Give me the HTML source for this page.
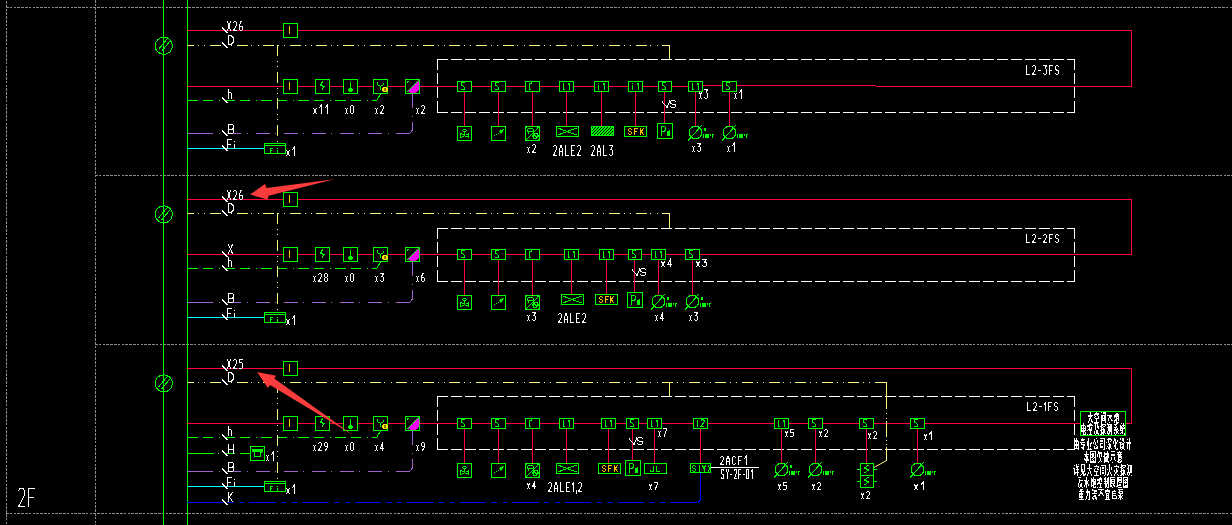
<!DOCTYPE html><html><head><meta charset="utf-8"><style>html,body{margin:0;padding:0;background:#000;overflow:hidden}</style></head><body><svg width="1232" height="525" viewBox="0 0 1232 525" shape-rendering="crispEdges" fill="none" style="display:block">
<rect width="1232" height="525" fill="#000"/>
<path d="M6 7.5H1232" stroke="#8c8c8c" stroke-dasharray="2.5 1.3" stroke-dashoffset="0"/>
<path d="M6.5 1V525" stroke="#8c8c8c" stroke-dasharray="2.5 1.3" stroke-dashoffset="0"/>
<path d="M95.5 0V525" stroke="#8c8c8c" stroke-dasharray="2.5 1.3" stroke-dashoffset="0"/>
<path d="M95 175.5H1232" stroke="#8c8c8c" stroke-dasharray="2.5 1.3" stroke-dashoffset="0"/>
<path d="M95 344.5H1232" stroke="#8c8c8c" stroke-dasharray="2.5 1.3" stroke-dashoffset="0"/>
<path d="M6 513.5H1232" stroke="#8c8c8c" stroke-dasharray="2.5 1.3" stroke-dashoffset="0"/>
<path d="M163.5 0V525" stroke="#00ff00"/>
<path d="M187.5 0V525" stroke="#00ff00"/>
<path d="M18.50 490.75L20.00 488.50H23.00L24.50 490.75V495.25L18.50 506.50H24.50" stroke="#ffffff" stroke-linecap="square"/>
<path d="M34.50 488.50H28.50V506.50M28.50 497.50H33.00" stroke="#ffffff" stroke-linecap="square"/>
<circle cx="163.8" cy="45.8" r="8.6" stroke="#00ff00"/>
<path d="M158.5 49.5L167.5 38.5" stroke="#00ff00" stroke-width="1"/>
<path d="M161.5 51.5L170.5 40.5" stroke="#00ff00" stroke-width="1"/>
<path d="M187 30.5H1132" stroke="#ff0040"/>
<path d="M1131.5 30V87" stroke="#ff0040"/>
<path d="M187 86.5H703" stroke="#ff0040"/>
<path d="M703 85.5H876" stroke="#ff0040"/>
<path d="M876 86.5H1132" stroke="#ff0040"/>
<path d="M187 45.5H670" stroke="#f8f880" stroke-dasharray="11 3.8 1 5.2 1 4.6" stroke-dashoffset="3.6"/>
<path d="M437 59.5H1075" stroke="#ffffff" stroke-dasharray="10.5 3.5" stroke-dashoffset="0"/>
<path d="M437 112.5H1075" stroke="#ffffff" stroke-dasharray="10.5 3.5" stroke-dashoffset="0"/>
<path d="M437.5 59V113" stroke="#ffffff" stroke-dasharray="10.5 3.5" stroke-dashoffset="0"/>
<path d="M1074.5 59V113" stroke="#ffffff" stroke-dasharray="10.5 3.5" stroke-dashoffset="0"/>
<path d="M669.5 45V60" stroke="#f8f880"/>
<path d="M187 100.5H377" stroke="#00ff00" stroke-dasharray="10.5 5 10.5 5.5 1 4.5" stroke-dashoffset="0"/>
<path d="M376.5 100.5L380.5 94" stroke="#00ff00" stroke-width="1"/>
<path d="M187 133.5H212" stroke="#a064d0"/>
<path d="M412.5 94V130" stroke="#a064d0" stroke-dasharray="14 7.5 1 5.6"/>
<path d="M412.5 130L409.5 133.5" stroke="#a064d0" stroke-width="1"/>
<path d="M410 133.5H212" stroke="#a064d0" stroke-dasharray="14 7.5 1 5.6"/>
<path d="M187 148.5H265" stroke="#00ffff"/>
<path d="M277.5 45V144" stroke="#f8f880" stroke-dasharray="11 5 1 4 1 4.6" stroke-dashoffset="0"/>
<rect x="283.5" y="23.5" width="14" height="14" stroke="#00ff00" fill="#000"/>
<path d="M289.5 26V34" stroke="#ffc000"/>
<rect x="283.5" y="79.5" width="14" height="14" stroke="#00ff00" fill="#000"/>
<path d="M289.5 82V90" stroke="#ffc000"/>
<rect x="315.5" y="79.5" width="14" height="14" stroke="#00ff00" fill="#000"/>
<path d="M322.5 81.5L320.5 85.5L324.5 86.5L322 89.5" stroke="#00ff00" fill="none" stroke-width="1"/>
<rect x="343.5" y="79.5" width="14" height="14" stroke="#00ff00" fill="#000"/>
<path d="M350.5 82V89" stroke="#00ff00"/>
<rect x="349" y="88" width="3" height="4" fill="#00ff00"/>
<rect x="348" y="89" width="5" height="2" fill="#00ff00"/>
<rect x="373.5" y="79.5" width="14" height="14" stroke="#00ff00" fill="#000"/>
<path d="M377.5 82V84.5L380.5 86.5L383.5 84.5V83M380.5 86.5V90" stroke="#00ff00" fill="none" stroke-width="1"/>
<rect x="383" y="87" width="4" height="5" fill="#ffe800"/>
<rect x="382" y="88" width="6" height="3" fill="#ffe800"/>
<rect x="384" y="88" width="2" height="3" fill="#8a7000"/>
<rect x="405.5" y="79.5" width="14" height="14" stroke="#00ff00" fill="#000"/>
<path d="M408 91L417.8 81L418.8 83V89Q418 92 414 92.8Q410 92.8 408 91Z" stroke="#ff00ff" fill="#ff00ff" stroke-width="1" shape-rendering="auto"/>
<path d="M406.5 92.5L418.5 80.5" stroke="#00ff00" stroke-width="1"/>
<rect x="407" y="81" width="1" height="2" fill="#00ff00"/>
<rect x="407" y="81" width="2" height="1" fill="#00ff00"/>
<rect x="264.5" y="143.5" width="21" height="10" stroke="#00ff00" fill="#000"/>
<path d="M264 145.5H286" stroke="#00ff00"/>
<path d="M270.5 148V154" stroke="#00ff00"/>
<path d="M270 148.5H273" stroke="#00ff00"/>
<path d="M270 150.5H272" stroke="#00ff00"/>
<path d="M277.5 150V154" stroke="#00ff00"/>
<rect x="277" y="148" width="1" height="1" fill="#00ff00"/>
<path d="M286.50 150.10V150.90M289.50 150.10V150.90M287.50 151.10V154.90M288.50 151.10V154.90M286.50 155.10V155.90M289.50 155.10V155.90M292.50 149.50L294.10 147.50V155.50" stroke="#ffffff" stroke-linecap="square"/>
<path d="M222 27.5L227.5 33" stroke="#ffffff" stroke-width="1"/>
<path d="M227.50 21.50L230.50 30.50M230.50 21.50L227.50 30.50M233.50 22.62L234.25 21.50H235.75L236.50 22.62V24.88L233.50 30.50H236.50M241.75 21.50H241.00L239.50 24.88V29.38L240.25 30.50H241.75L242.50 29.38V27.12L241.75 26.00H239.50" stroke="#ffffff" stroke-linecap="square"/>
<path d="M222 42.5L227.5 48" stroke="#ffffff" stroke-width="1"/>
<path d="M228.50 35.50V44.50H231.00L233.50 42.25V37.75L231.00 35.50Z" stroke="#ffffff" stroke-linecap="square"/>
<path d="M222 97.5L227.5 103" stroke="#ffffff" stroke-width="1"/>
<path d="M228.50 89.50V98.50M228.50 94.00L229.25 92.88H230.75L231.50 94.00V98.50" stroke="#ffffff" stroke-linecap="square"/>
<path d="M222 130.5L227.5 136" stroke="#ffffff" stroke-width="1"/>
<path d="M228.50 124.50V133.50H232.25L233.50 132.38V130.12L232.25 129.00H228.50M228.50 124.50H232.25L233.50 125.62V127.88L232.25 129.00" stroke="#ffffff" stroke-linecap="square"/>
<path d="M222 145.5L227.5 151" stroke="#ffffff" stroke-width="1"/>
<path d="M231.50 139.50H227.50V148.50M227.50 144.00H230.50M234.50 144.22V148.50M234.50 141.64V141.86" stroke="#ffffff" stroke-linecap="square"/>
<path d="M313.50 108.10V108.90M316.50 108.10V108.90M314.50 109.10V112.90M315.50 109.10V112.90M313.50 113.10V113.90M316.50 113.10V113.90M319.50 107.50L321.10 105.50V113.50M325.50 107.50L327.10 105.50V113.50" stroke="#ffffff" stroke-linecap="square"/>
<path d="M345.50 108.10V108.90M347.50 108.10V108.90M346.17 109.10V112.90M346.83 109.10V112.90M345.50 113.10V113.90M347.50 113.10V113.90M350.50 106.50V112.50L351.25 113.50H352.75L353.50 112.50V106.50L352.75 105.50H351.25Z" stroke="#ffffff" stroke-linecap="square"/>
<path d="M375.50 108.10V108.90M377.50 108.10V108.90M376.17 109.10V112.90M376.83 109.10V112.90M375.50 113.10V113.90M377.50 113.10V113.90M380.50 106.50L381.25 105.50H382.75L383.50 106.50V108.50L380.50 113.50H383.50" stroke="#ffffff" stroke-linecap="square"/>
<path d="M416.50 108.10V108.90M418.50 108.10V108.90M417.17 109.10V112.90M417.83 109.10V112.90M416.50 113.10V113.90M418.50 113.10V113.90M421.50 106.50L422.25 105.50H423.75L424.50 106.50V108.50L421.50 113.50H424.50" stroke="#ffffff" stroke-linecap="square"/>
<path d="M464.5 91V127" stroke="#ff0040"/>
<path d="M498.5 91V127" stroke="#ff0040"/>
<path d="M532.5 91V127" stroke="#ff0040"/>
<path d="M566.5 91V127" stroke="#ff0040"/>
<path d="M601.5 91V127" stroke="#ff0040"/>
<path d="M635.5 91V127" stroke="#ff0040"/>
<path d="M664.5 91V127" stroke="#ff0040"/>
<path d="M695.5 91V127" stroke="#ff0040"/>
<path d="M729.5 91V127" stroke="#ff0040"/>
<rect x="457.5" y="81.5" width="14" height="10" stroke="#00ff00" fill="#000"/>
<path d="M465 82.5H461.5V85L464.5 87.5V89.5M461 89.5H464" stroke="#00ff00" fill="none" stroke-width="1"/>
<rect x="491.5" y="81.5" width="14" height="10" stroke="#00ff00" fill="#000"/>
<path d="M499 82.5H495.5V85L498.5 87.5V89.5M495 89.5H498" stroke="#00ff00" fill="none" stroke-width="1"/>
<rect x="525.5" y="81.5" width="14" height="10" stroke="#00ff00" fill="#000"/>
<path d="M532.5 82.5L529.5 84V89.5H531" stroke="#00ff00" fill="none" stroke-width="1"/>
<rect x="559.5" y="81.5" width="14" height="10" stroke="#00ff00" fill="#000"/>
<path d="M563.5 83V89.5H564.5M569.5 82.5V89.5M568 84.5L569.5 83" stroke="#00ff00" fill="none" stroke-width="1"/>
<rect x="594.5" y="81.5" width="14" height="10" stroke="#00ff00" fill="#000"/>
<path d="M598.5 85V89.5M598.5 83V83.5M604.5 82.5V89.5M603 84.5L604.5 83" stroke="#00ff00" fill="none" stroke-width="1"/>
<rect x="628.5" y="81.5" width="14" height="10" stroke="#00ff00" fill="#000"/>
<path d="M632.5 85V89.5M632.5 83V83.5M638.5 82.5V89.5M637 84.5L638.5 83" stroke="#00ff00" fill="none" stroke-width="1"/>
<rect x="658.5" y="81.5" width="13" height="10" stroke="#00ff00" fill="#000"/>
<path d="M666 82.5H662.5V85L665.5 87.5V89.5M662 89.5H665" stroke="#00ff00" fill="none" stroke-width="1"/>
<rect x="688.5" y="81.5" width="14" height="10" stroke="#00ff00" fill="#000"/>
<path d="M692.5 83V89.5H693.5M698.5 82.5V89.5M697 84.5L698.5 83" stroke="#00ff00" fill="none" stroke-width="1"/>
<rect x="722.5" y="81.5" width="14" height="10" stroke="#00ff00" fill="#000"/>
<path d="M730 82.5H726.5V85L729.5 87.5V89.5M726 89.5H729" stroke="#00ff00" fill="none" stroke-width="1"/>
<rect x="457.5" y="126.5" width="14" height="14" stroke="#00ff00" fill="#000"/>
<ellipse cx="464.5" cy="130.5" rx="2" ry="1" stroke="#00ff00"/>
<path d="M464.5 131.5V134.5M461.5 133.5H460.5V137.5H461.5M461.5 134.5H463.5M461.5 136.5H463.5L464.5 135.5L465.5 136.5H467.5M465.5 134.5H467.5M467.5 133.5H468.5V137.5H467.5" stroke="#00ff00" fill="none" stroke-width="1"/>
<rect x="491.5" y="126.5" width="14" height="14" stroke="#00ff00" fill="#000"/>
<path d="M494 135.5H495M496 134.5H497M498 133.5H499M500 132.5L503 130" stroke="#00ff00" fill="none" stroke-width="1"/>
<path d="M503.5 129.5L499.5 131L501 133.5Z" stroke="#00ff00" fill="#00ff00" stroke-width="1" shape-rendering="auto"/>
<rect x="525.5" y="126.5" width="14" height="14" stroke="#00ff00" fill="#000"/>
<rect x="526" y="127" width="1" height="1" fill="#00ff00"/>
<rect x="538" y="139" width="1" height="1" fill="#00ff00"/>
<rect x="537" y="127" width="2" height="1" fill="#00ff00"/>
<rect x="526" y="139" width="1" height="1" fill="#00ff00"/>
<path d="M526.5 139.5L538.5 127.5" stroke="#00ff00" stroke-width="1"/>
<path d="M527.5 131.5V129.5L528.5 128.5H532.5L533.5 129.5V131.5H527.5M528.5 132V133.5" stroke="#00ff00" fill="none" stroke-width="1"/>
<circle cx="535.5" cy="136" r="2.6" stroke="#00ff00"/>
<path d="M533.5 134L537.5 138" stroke="#00ff00" stroke-width="1"/>
<rect x="556.5" y="126.5" width="22" height="10" stroke="#00ff00" fill="#000"/>
<path d="M558 128L567.0 131.5L577 135M558 135L567.0 131.5L577 128" stroke="#00ff00" fill="none" stroke-width="1"/>
<rect x="591" y="126" width="23" height="10" fill="#00ff00"/>
<clipPath id="hc591126"><rect x="592" y="127" width="21" height="8"/></clipPath>
<path d="M582 135L590 127M585 135L593 127M588 135L596 127M591 135L599 127M594 135L602 127M597 135L605 127M600 135L608 127M603 135L611 127M606 135L614 127M609 135L617 127M612 135L620 127M615 135L623 127M618 135L626 127" stroke="#000" clip-path="url(#hc591126)"/>
<rect x="624.5" y="126.5" width="22" height="10" stroke="#00ff00" fill="#000"/>
<path d="M631.50 129.25L630.75 128.50H629.25L628.50 129.25V130.75L629.25 131.50H630.75L631.50 132.25V133.75L630.75 134.50H629.25L628.50 133.75M637.50 128.50H634.50V134.50M634.50 131.50H636.75M640.50 128.50V134.50M643.50 128.50L640.50 132.25M641.25 131.50L643.50 134.50" stroke="#ffc000" stroke-linecap="square"/>
<rect x="657.5" y="123.5" width="15" height="15" stroke="#00ff00" fill="#000"/>
<path d="M661.50 135.50V126.50H664.50L665.50 127.62V129.88L664.50 131.00H661.50" stroke="#00ff00" stroke-linecap="square"/>
<rect x="667" y="131" width="3" height="5" fill="#00ff00"/>
<rect x="669" y="130" width="1" height="1" fill="#00ff00"/>
<circle cx="695.5" cy="132.5" r="6.4" stroke="#00ff00"/>
<path d="M688.0 140.8L702.0 125.0" stroke="#00ff00" stroke-width="1"/>
<rect x="703" y="134" width="1" height="4" fill="#00ff00"/>
<rect x="705" y="134" width="4" height="4" fill="#00ff00"/>
<rect x="710" y="134" width="1" height="1" fill="#00ff00"/>
<rect x="710" y="135" width="1" height="1" fill="#00ff00"/>
<rect x="712" y="134" width="2" height="1" fill="#00ff00"/>
<rect x="712" y="134" width="1" height="4" fill="#00ff00"/>
<rect x="704" y="128" width="2" height="3" fill="#00ff00"/>
<circle cx="729.5" cy="132.5" r="6.4" stroke="#00ff00"/>
<path d="M722.0 140.8L736.0 125.0" stroke="#00ff00" stroke-width="1"/>
<rect x="737" y="134" width="1" height="4" fill="#00ff00"/>
<rect x="739" y="134" width="4" height="4" fill="#00ff00"/>
<rect x="744" y="134" width="1" height="1" fill="#00ff00"/>
<rect x="744" y="135" width="1" height="1" fill="#00ff00"/>
<rect x="746" y="134" width="2" height="1" fill="#00ff00"/>
<rect x="746" y="134" width="1" height="4" fill="#00ff00"/>
<path d="M527.50 147.10V147.90M529.50 147.10V147.90M528.17 148.10V151.90M528.83 148.10V151.90M527.50 152.10V152.90M529.50 152.10V152.90M532.50 145.50L533.25 144.50H534.75L535.50 145.50V147.50L532.50 152.50H535.50" stroke="#ffffff" stroke-linecap="square"/>
<path d="M553.50 146.75L554.25 145.50H555.75L556.50 146.75V149.25L553.50 155.50H556.50M559.50 155.50V149.25L561.00 145.50L562.50 149.25V155.50M559.50 151.75H562.50M565.50 145.50V155.50H568.50M574.50 145.50H571.50V155.50H574.50M571.50 150.50H573.75M577.50 146.75L578.25 145.50H579.75L580.50 146.75V149.25L577.50 155.50H580.50" stroke="#ffffff" stroke-linecap="square"/>
<path d="M591.50 146.75L592.25 145.50H593.75L594.50 146.75V149.25L591.50 155.50H594.50M597.50 155.50V149.25L599.00 145.50L600.50 149.25V155.50M597.50 151.75H600.50M603.50 145.50V155.50H606.50M609.50 145.50H612.50L611.00 149.25H611.75L612.50 150.50V154.25L611.75 155.50H610.25L609.50 154.25" stroke="#ffffff" stroke-linecap="square"/>
<path d="M692.50 146.10V146.90M694.50 146.10V146.90M693.17 147.10V150.90M693.83 147.10V150.90M692.50 151.10V151.90M694.50 151.10V151.90M697.50 143.50H700.50L699.00 146.50H699.75L700.50 147.50V150.50L699.75 151.50H698.25L697.50 150.50" stroke="#ffffff" stroke-linecap="square"/>
<path d="M727.50 146.10V146.90M729.50 146.10V146.90M728.17 147.10V150.90M728.83 147.10V150.90M727.50 151.10V151.90M729.50 151.10V151.90M732.50 145.50L734.10 143.50V151.50" stroke="#ffffff" stroke-linecap="square"/>
<path d="M662 101.5L667 107.5" stroke="#ffffff" stroke-width="1"/>
<path d="M667 107.5L670 100.5" stroke="#ffffff" stroke-width="1"/>
<path d="M675.50 101.38L674.25 100.50H671.75L670.50 101.38V103.12L671.75 104.00H674.25L675.50 104.88V106.62L674.25 107.50H671.75L670.50 106.62" stroke="#ffffff" stroke-linecap="square"/>
<path d="M699.50 92.42V93.33M701.50 92.42V93.33M700.17 93.55V97.83M700.83 93.55V97.83M699.50 98.05V98.95M701.50 98.05V98.95M704.50 89.50H707.50L706.00 92.88H706.75L707.50 94.00V97.38L706.75 98.50H705.25L704.50 97.38" stroke="#ffffff" stroke-linecap="square"/>
<path d="M734.50 93.10V93.90M736.50 93.10V93.90M735.17 94.10V97.90M735.83 94.10V97.90M734.50 98.10V98.90M736.50 98.10V98.90M739.50 92.50L741.10 90.50V98.50" stroke="#ffffff" stroke-linecap="square"/>
<path d="M1026.50 65.50V74.50H1029.50M1032.50 66.62L1033.25 65.50H1034.75L1035.50 66.62V68.88L1032.50 74.50H1035.50M1038.50 70.00H1040.50M1043.50 65.50H1046.50L1045.00 68.88H1045.75L1046.50 70.00V73.38L1045.75 74.50H1044.25L1043.50 73.38M1052.50 65.50H1049.50V74.50M1049.50 70.00H1051.75M1058.50 66.62L1057.75 65.50H1056.25L1055.50 66.62V68.88L1056.25 70.00H1057.75L1058.50 71.12V73.38L1057.75 74.50H1056.25L1055.50 73.38" stroke="#ffffff" stroke-linecap="square"/>
<circle cx="163.8" cy="214.39999999999998" r="8.6" stroke="#00ff00"/>
<path d="M158.5 218.1L167.5 207.1" stroke="#00ff00" stroke-width="1"/>
<path d="M161.5 220.1L170.5 209.1" stroke="#00ff00" stroke-width="1"/>
<path d="M187 199.5H1132" stroke="#ff0040"/>
<path d="M1131.5 199V255" stroke="#ff0040"/>
<path d="M187 254.5H1132" stroke="#ff0040"/>
<path d="M187 213.5H670" stroke="#f8f880" stroke-dasharray="11 3.8 1 5.2 1 4.6" stroke-dashoffset="3.6"/>
<path d="M437 228.5H1075" stroke="#ffffff" stroke-dasharray="10.5 3.5" stroke-dashoffset="0"/>
<path d="M437 281.5H1075" stroke="#ffffff" stroke-dasharray="10.5 3.5" stroke-dashoffset="0"/>
<path d="M437.5 228V282" stroke="#ffffff" stroke-dasharray="10.5 3.5" stroke-dashoffset="0"/>
<path d="M1074.5 228V282" stroke="#ffffff" stroke-dasharray="10.5 3.5" stroke-dashoffset="0"/>
<path d="M669.5 213V229" stroke="#f8f880"/>
<path d="M187 268.5H377" stroke="#00ff00" stroke-dasharray="10.5 5 10.5 5.5 1 4.5" stroke-dashoffset="0"/>
<path d="M376.5 268.5L380.5 262" stroke="#00ff00" stroke-width="1"/>
<path d="M187 302.5H212" stroke="#a064d0"/>
<path d="M412.5 262V299" stroke="#a064d0" stroke-dasharray="14 7.5 1 5.6"/>
<path d="M412.5 299L409.5 302.5" stroke="#a064d0" stroke-width="1"/>
<path d="M410 302.5H212" stroke="#a064d0" stroke-dasharray="14 7.5 1 5.6"/>
<path d="M187 317.5H265" stroke="#00ffff"/>
<path d="M277.5 213V313" stroke="#f8f880" stroke-dasharray="11 5 1 4 1 4.6" stroke-dashoffset="0"/>
<rect x="283.5" y="192.5" width="14" height="14" stroke="#00ff00" fill="#000"/>
<path d="M289.5 195V203" stroke="#ffc000"/>
<rect x="283.5" y="247.5" width="14" height="14" stroke="#00ff00" fill="#000"/>
<path d="M289.5 250V258" stroke="#ffc000"/>
<rect x="315.5" y="247.5" width="14" height="14" stroke="#00ff00" fill="#000"/>
<path d="M322.5 249.5L320.5 253.5L324.5 254.5L322 257.5" stroke="#00ff00" fill="none" stroke-width="1"/>
<rect x="343.5" y="247.5" width="14" height="14" stroke="#00ff00" fill="#000"/>
<path d="M350.5 250V257" stroke="#00ff00"/>
<rect x="349" y="256" width="3" height="4" fill="#00ff00"/>
<rect x="348" y="257" width="5" height="2" fill="#00ff00"/>
<rect x="373.5" y="247.5" width="14" height="14" stroke="#00ff00" fill="#000"/>
<path d="M377.5 250V252.5L380.5 254.5L383.5 252.5V251M380.5 254.5V258" stroke="#00ff00" fill="none" stroke-width="1"/>
<rect x="383" y="255" width="4" height="5" fill="#ffe800"/>
<rect x="382" y="256" width="6" height="3" fill="#ffe800"/>
<rect x="384" y="256" width="2" height="3" fill="#8a7000"/>
<rect x="405.5" y="247.5" width="14" height="14" stroke="#00ff00" fill="#000"/>
<path d="M408 259L417.8 249L418.8 251V257Q418 260 414 260.8Q410 260.8 408 259Z" stroke="#ff00ff" fill="#ff00ff" stroke-width="1" shape-rendering="auto"/>
<path d="M406.5 260.5L418.5 248.5" stroke="#00ff00" stroke-width="1"/>
<rect x="407" y="249" width="1" height="2" fill="#00ff00"/>
<rect x="407" y="249" width="2" height="1" fill="#00ff00"/>
<rect x="264.5" y="312.5" width="21" height="10" stroke="#00ff00" fill="#000"/>
<path d="M264 314.5H286" stroke="#00ff00"/>
<path d="M270.5 317V323" stroke="#00ff00"/>
<path d="M270 317.5H273" stroke="#00ff00"/>
<path d="M270 319.5H272" stroke="#00ff00"/>
<path d="M277.5 319V323" stroke="#00ff00"/>
<rect x="277" y="317" width="1" height="1" fill="#00ff00"/>
<path d="M286.50 319.10V319.90M289.50 319.10V319.90M287.50 320.10V323.90M288.50 320.10V323.90M286.50 324.10V324.90M289.50 324.10V324.90M292.50 318.50L294.10 316.50V324.50" stroke="#ffffff" stroke-linecap="square"/>
<path d="M222 196.5L227.5 202" stroke="#ffffff" stroke-width="1"/>
<path d="M227.50 190.50L230.50 199.50M230.50 190.50L227.50 199.50M233.50 191.62L234.25 190.50H235.75L236.50 191.62V193.88L233.50 199.50H236.50M241.75 190.50H241.00L239.50 193.88V198.38L240.25 199.50H241.75L242.50 198.38V196.12L241.75 195.00H239.50" stroke="#ffffff" stroke-linecap="square"/>
<path d="M222 210.5L227.5 216" stroke="#ffffff" stroke-width="1"/>
<path d="M228.50 203.50V212.50H231.00L233.50 210.25V205.75L231.00 203.50Z" stroke="#ffffff" stroke-linecap="square"/>
<path d="M222 265.5L227.5 271" stroke="#ffffff" stroke-width="1"/>
<path d="M228.50 257.50V266.50M228.50 262.00L229.25 260.88H230.75L231.50 262.00V266.50" stroke="#ffffff" stroke-linecap="square"/>
<path d="M222 299.5L227.5 305" stroke="#ffffff" stroke-width="1"/>
<path d="M228.50 293.50V302.50H232.25L233.50 301.38V299.12L232.25 298.00H228.50M228.50 293.50H232.25L233.50 294.62V296.88L232.25 298.00" stroke="#ffffff" stroke-linecap="square"/>
<path d="M222 314.5L227.5 320" stroke="#ffffff" stroke-width="1"/>
<path d="M231.50 308.50H227.50V317.50M227.50 313.00H230.50M234.50 313.23V317.50M234.50 310.64V310.86" stroke="#ffffff" stroke-linecap="square"/>
<path d="M222 251.5L227.5 257" stroke="#ffffff" stroke-width="1"/>
<path d="M228.50 244.50L232.50 253.50M232.50 244.50L228.50 253.50" stroke="#ffffff" stroke-linecap="square"/>
<path d="M313.50 276.10V276.90M315.50 276.10V276.90M314.17 277.10V280.90M314.83 277.10V280.90M313.50 281.10V281.90M315.50 281.10V281.90M318.50 274.50L319.25 273.50H320.75L321.50 274.50V276.50L318.50 281.50H321.50M325.25 273.50H326.75L327.50 274.50V276.50L326.75 277.50H325.25L324.50 278.50V280.50L325.25 281.50H326.75L327.50 280.50V278.50L326.75 277.50H325.25L324.50 276.50V274.50Z" stroke="#ffffff" stroke-linecap="square"/>
<path d="M345.50 276.10V276.90M347.50 276.10V276.90M346.17 277.10V280.90M346.83 277.10V280.90M345.50 281.10V281.90M347.50 281.10V281.90M350.50 274.50V280.50L351.25 281.50H352.75L353.50 280.50V274.50L352.75 273.50H351.25Z" stroke="#ffffff" stroke-linecap="square"/>
<path d="M375.50 276.10V276.90M377.50 276.10V276.90M376.17 277.10V280.90M376.83 277.10V280.90M375.50 281.10V281.90M377.50 281.10V281.90M380.50 273.50H383.50L382.00 276.50H382.75L383.50 277.50V280.50L382.75 281.50H381.25L380.50 280.50" stroke="#ffffff" stroke-linecap="square"/>
<path d="M416.50 276.10V276.90M418.50 276.10V276.90M417.17 277.10V280.90M417.83 277.10V280.90M416.50 281.10V281.90M418.50 281.10V281.90M423.75 273.50H423.00L421.50 276.50V280.50L422.25 281.50H423.75L424.50 280.50V278.50L423.75 277.50H421.50" stroke="#ffffff" stroke-linecap="square"/>
<path d="M464.5 259V296" stroke="#ff0040"/>
<path d="M498.5 259V296" stroke="#ff0040"/>
<path d="M532.5 259V296" stroke="#ff0040"/>
<path d="M571.5 259V296" stroke="#ff0040"/>
<path d="M606.5 259V296" stroke="#ff0040"/>
<path d="M634.5 259V296" stroke="#ff0040"/>
<path d="M658.5 259V296" stroke="#ff0040"/>
<path d="M692.5 259V296" stroke="#ff0040"/>
<rect x="457.5" y="249.5" width="14" height="10" stroke="#00ff00" fill="#000"/>
<path d="M465 250.5H461.5V253L464.5 255.5V257.5M461 257.5H464" stroke="#00ff00" fill="none" stroke-width="1"/>
<rect x="491.5" y="249.5" width="14" height="10" stroke="#00ff00" fill="#000"/>
<path d="M499 250.5H495.5V253L498.5 255.5V257.5M495 257.5H498" stroke="#00ff00" fill="none" stroke-width="1"/>
<rect x="525.5" y="249.5" width="14" height="10" stroke="#00ff00" fill="#000"/>
<path d="M532.5 250.5L529.5 252V257.5H531" stroke="#00ff00" fill="none" stroke-width="1"/>
<rect x="564.5" y="249.5" width="14" height="10" stroke="#00ff00" fill="#000"/>
<path d="M568.5 251V257.5H569.5M574.5 250.5V257.5M573 252.5L574.5 251" stroke="#00ff00" fill="none" stroke-width="1"/>
<rect x="599.5" y="249.5" width="14" height="10" stroke="#00ff00" fill="#000"/>
<path d="M603.5 251V257.5H604.5M609.5 250.5V257.5M608 252.5L609.5 251" stroke="#00ff00" fill="none" stroke-width="1"/>
<rect x="628.5" y="249.5" width="13" height="10" stroke="#00ff00" fill="#000"/>
<path d="M636 250.5H632.5V253L635.5 255.5V257.5M632 257.5H635" stroke="#00ff00" fill="none" stroke-width="1"/>
<rect x="651.5" y="249.5" width="14" height="10" stroke="#00ff00" fill="#000"/>
<path d="M655.5 251V257.5H656.5M661.5 250.5V257.5M660 252.5L661.5 251" stroke="#00ff00" fill="none" stroke-width="1"/>
<rect x="685.5" y="249.5" width="14" height="10" stroke="#00ff00" fill="#000"/>
<path d="M693 250.5H689.5V253L692.5 255.5V257.5M689 257.5H692" stroke="#00ff00" fill="none" stroke-width="1"/>
<rect x="457.5" y="295.5" width="14" height="14" stroke="#00ff00" fill="#000"/>
<ellipse cx="464.5" cy="299.5" rx="2" ry="1" stroke="#00ff00"/>
<path d="M464.5 300.5V303.5M461.5 302.5H460.5V306.5H461.5M461.5 303.5H463.5M461.5 305.5H463.5L464.5 304.5L465.5 305.5H467.5M465.5 303.5H467.5M467.5 302.5H468.5V306.5H467.5" stroke="#00ff00" fill="none" stroke-width="1"/>
<rect x="491.5" y="295.5" width="14" height="14" stroke="#00ff00" fill="#000"/>
<path d="M494 304.5H495M496 303.5H497M498 302.5H499M500 301.5L503 299" stroke="#00ff00" fill="none" stroke-width="1"/>
<path d="M503.5 298.5L499.5 300L501 302.5Z" stroke="#00ff00" fill="#00ff00" stroke-width="1" shape-rendering="auto"/>
<rect x="525.5" y="295.5" width="14" height="14" stroke="#00ff00" fill="#000"/>
<rect x="526" y="296" width="1" height="1" fill="#00ff00"/>
<rect x="538" y="308" width="1" height="1" fill="#00ff00"/>
<rect x="537" y="296" width="2" height="1" fill="#00ff00"/>
<rect x="526" y="308" width="1" height="1" fill="#00ff00"/>
<path d="M526.5 308.5L538.5 296.5" stroke="#00ff00" stroke-width="1"/>
<path d="M527.5 300.5V298.5L528.5 297.5H532.5L533.5 298.5V300.5H527.5M528.5 301V302.5" stroke="#00ff00" fill="none" stroke-width="1"/>
<circle cx="535.5" cy="305" r="2.6" stroke="#00ff00"/>
<path d="M533.5 303L537.5 307" stroke="#00ff00" stroke-width="1"/>
<rect x="561.5" y="294.5" width="22" height="10" stroke="#00ff00" fill="#000"/>
<path d="M563 296L572.0 299.5L582 303M563 303L572.0 299.5L582 296" stroke="#00ff00" fill="none" stroke-width="1"/>
<rect x="595.5" y="294.5" width="22" height="10" stroke="#00ff00" fill="#000"/>
<path d="M602.50 297.25L601.75 296.50H600.25L599.50 297.25V298.75L600.25 299.50H601.75L602.50 300.25V301.75L601.75 302.50H600.25L599.50 301.75M608.50 296.50H605.50V302.50M605.50 299.50H607.75M610.50 296.50V302.50M613.50 296.50L610.50 300.25M611.25 299.50L613.50 302.50" stroke="#ffc000" stroke-linecap="square"/>
<rect x="627.5" y="292.5" width="15" height="15" stroke="#00ff00" fill="#000"/>
<path d="M631.50 304.50V295.50H634.50L635.50 296.62V298.88L634.50 300.00H631.50" stroke="#00ff00" stroke-linecap="square"/>
<rect x="637" y="300" width="3" height="5" fill="#00ff00"/>
<rect x="639" y="299" width="1" height="1" fill="#00ff00"/>
<circle cx="658.5" cy="301.5" r="6.4" stroke="#00ff00"/>
<path d="M651.0 309.8L665.0 294.0" stroke="#00ff00" stroke-width="1"/>
<rect x="666" y="303" width="1" height="4" fill="#00ff00"/>
<rect x="668" y="303" width="4" height="4" fill="#00ff00"/>
<rect x="673" y="303" width="1" height="1" fill="#00ff00"/>
<rect x="673" y="304" width="1" height="1" fill="#00ff00"/>
<rect x="675" y="303" width="2" height="1" fill="#00ff00"/>
<rect x="675" y="303" width="1" height="4" fill="#00ff00"/>
<rect x="667" y="297" width="2" height="3" fill="#00ff00"/>
<circle cx="692.5" cy="301.5" r="6.4" stroke="#00ff00"/>
<path d="M685.0 309.8L699.0 294.0" stroke="#00ff00" stroke-width="1"/>
<rect x="700" y="303" width="1" height="4" fill="#00ff00"/>
<rect x="702" y="303" width="4" height="4" fill="#00ff00"/>
<rect x="707" y="303" width="1" height="1" fill="#00ff00"/>
<rect x="707" y="304" width="1" height="1" fill="#00ff00"/>
<rect x="709" y="303" width="2" height="1" fill="#00ff00"/>
<rect x="709" y="303" width="1" height="4" fill="#00ff00"/>
<rect x="701" y="297" width="2" height="3" fill="#00ff00"/>
<path d="M527.50 315.10V315.90M529.50 315.10V315.90M528.17 316.10V319.90M528.83 316.10V319.90M527.50 320.10V320.90M529.50 320.10V320.90M532.50 312.50H535.50L534.00 315.50H534.75L535.50 316.50V319.50L534.75 320.50H533.25L532.50 319.50" stroke="#ffffff" stroke-linecap="square"/>
<path d="M558.50 314.62L559.25 313.50H560.75L561.50 314.62V316.88L558.50 322.50H561.50M564.50 322.50V316.88L566.00 313.50L567.50 316.88V322.50M564.50 319.12H567.50M570.50 313.50V322.50H573.50M579.50 313.50H576.50V322.50H579.50M576.50 318.00H578.75M582.50 314.62L583.25 313.50H584.75L585.50 314.62V316.88L582.50 322.50H585.50" stroke="#ffffff" stroke-linecap="square"/>
<path d="M655.50 315.10V315.90M657.50 315.10V315.90M656.17 316.10V319.90M656.83 316.10V319.90M655.50 320.10V320.90M657.50 320.10V320.90M662.75 320.50V312.50L660.50 318.50H663.50" stroke="#ffffff" stroke-linecap="square"/>
<path d="M689.50 315.10V315.90M691.50 315.10V315.90M690.17 316.10V319.90M690.83 316.10V319.90M689.50 320.10V320.90M691.50 320.10V320.90M694.50 312.50H697.50L696.00 315.50H696.75L697.50 316.50V319.50L696.75 320.50H695.25L694.50 319.50" stroke="#ffffff" stroke-linecap="square"/>
<path d="M632 269.5L637 275.5" stroke="#ffffff" stroke-width="1"/>
<path d="M637 275.5L640 268.5" stroke="#ffffff" stroke-width="1"/>
<path d="M645.50 269.38L644.25 268.50H641.75L640.50 269.38V271.12L641.75 272.00H644.25L645.50 272.88V274.62L644.25 275.50H641.75L640.50 274.62" stroke="#ffffff" stroke-linecap="square"/>
<path d="M661.50 261.77V262.48M664.50 261.77V262.48M662.50 262.65V265.98M663.50 262.65V265.98M661.50 266.15V266.85M664.50 266.15V266.85M670.50 266.50V259.50L667.50 264.75H671.50" stroke="#ffffff" stroke-linecap="square"/>
<path d="M696.50 261.77V262.48M699.50 261.77V262.48M697.50 262.65V265.98M698.50 262.65V265.98M696.50 266.15V266.85M699.50 266.15V266.85M702.50 259.50H706.50L704.50 262.12H705.50L706.50 263.00V265.62L705.50 266.50H703.50L702.50 265.62" stroke="#ffffff" stroke-linecap="square"/>
<path d="M1026.50 234.50V242.50H1029.50M1032.50 235.50L1033.25 234.50H1034.75L1035.50 235.50V237.50L1032.50 242.50H1035.50M1038.50 238.50H1040.50M1043.50 235.50L1044.25 234.50H1045.75L1046.50 235.50V237.50L1043.50 242.50H1046.50M1052.50 234.50H1049.50V242.50M1049.50 238.50H1051.75M1058.50 235.50L1057.75 234.50H1056.25L1055.50 235.50V237.50L1056.25 238.50H1057.75L1058.50 239.50V241.50L1057.75 242.50H1056.25L1055.50 241.50" stroke="#ffffff" stroke-linecap="square"/>
<circle cx="163.8" cy="383.40000000000003" r="8.6" stroke="#00ff00"/>
<path d="M158.5 387.1L167.5 376.1" stroke="#00ff00" stroke-width="1"/>
<path d="M161.5 389.1L170.5 378.1" stroke="#00ff00" stroke-width="1"/>
<path d="M187 368.5H1132" stroke="#ff0040"/>
<path d="M1131.5 368V424" stroke="#ff0040"/>
<path d="M187 423.5H1132" stroke="#ff0040"/>
<path d="M187 382.5H887" stroke="#f8f880" stroke-dasharray="11 3.8 1 5.2 1 4.6" stroke-dashoffset="3.6"/>
<path d="M437 396.5H1075" stroke="#ffffff" stroke-dasharray="10.5 3.5" stroke-dashoffset="0"/>
<path d="M437 449.5H1075" stroke="#ffffff" stroke-dasharray="10.5 3.5" stroke-dashoffset="0"/>
<path d="M437.5 396V450" stroke="#ffffff" stroke-dasharray="10.5 3.5" stroke-dashoffset="0"/>
<path d="M1074.5 396V450" stroke="#ffffff" stroke-dasharray="10.5 3.5" stroke-dashoffset="0"/>
<path d="M669.5 382V397" stroke="#f8f880"/>
<path d="M187 437.5H377" stroke="#00ff00" stroke-dasharray="10.5 5 10.5 5.5 1 4.5" stroke-dashoffset="0"/>
<path d="M376.5 437.5L380.5 431" stroke="#00ff00" stroke-width="1"/>
<path d="M187 471.5H212" stroke="#a064d0"/>
<path d="M412.5 431V468" stroke="#a064d0" stroke-dasharray="14 7.5 1 5.6"/>
<path d="M412.5 468L409.5 471.5" stroke="#a064d0" stroke-width="1"/>
<path d="M410 471.5H212" stroke="#a064d0" stroke-dasharray="14 7.5 1 5.6"/>
<path d="M187 486.5H265" stroke="#00ffff"/>
<path d="M277.5 382V482" stroke="#f8f880" stroke-dasharray="11 5 1 4 1 4.6" stroke-dashoffset="0"/>
<rect x="283.5" y="361.5" width="14" height="14" stroke="#00ff00" fill="#000"/>
<path d="M289.5 364V372" stroke="#ffc000"/>
<rect x="283.5" y="416.5" width="14" height="14" stroke="#00ff00" fill="#000"/>
<path d="M289.5 419V427" stroke="#ffc000"/>
<rect x="315.5" y="416.5" width="14" height="14" stroke="#00ff00" fill="#000"/>
<path d="M322.5 418.5L320.5 422.5L324.5 423.5L322 426.5" stroke="#00ff00" fill="none" stroke-width="1"/>
<rect x="343.5" y="416.5" width="14" height="14" stroke="#00ff00" fill="#000"/>
<path d="M350.5 419V426" stroke="#00ff00"/>
<rect x="349" y="425" width="3" height="4" fill="#00ff00"/>
<rect x="348" y="426" width="5" height="2" fill="#00ff00"/>
<rect x="373.5" y="416.5" width="14" height="14" stroke="#00ff00" fill="#000"/>
<path d="M377.5 419V421.5L380.5 423.5L383.5 421.5V420M380.5 423.5V427" stroke="#00ff00" fill="none" stroke-width="1"/>
<rect x="383" y="424" width="4" height="5" fill="#ffe800"/>
<rect x="382" y="425" width="6" height="3" fill="#ffe800"/>
<rect x="384" y="425" width="2" height="3" fill="#8a7000"/>
<rect x="405.5" y="416.5" width="14" height="14" stroke="#00ff00" fill="#000"/>
<path d="M408 428L417.8 418L418.8 420V426Q418 429 414 429.8Q410 429.8 408 428Z" stroke="#ff00ff" fill="#ff00ff" stroke-width="1" shape-rendering="auto"/>
<path d="M406.5 429.5L418.5 417.5" stroke="#00ff00" stroke-width="1"/>
<rect x="407" y="418" width="1" height="2" fill="#00ff00"/>
<rect x="407" y="418" width="2" height="1" fill="#00ff00"/>
<rect x="264.5" y="481.5" width="21" height="10" stroke="#00ff00" fill="#000"/>
<path d="M264 483.5H286" stroke="#00ff00"/>
<path d="M270.5 486V492" stroke="#00ff00"/>
<path d="M270 486.5H273" stroke="#00ff00"/>
<path d="M270 488.5H272" stroke="#00ff00"/>
<path d="M277.5 488V492" stroke="#00ff00"/>
<rect x="277" y="486" width="1" height="1" fill="#00ff00"/>
<path d="M286.50 488.10V488.90M289.50 488.10V488.90M287.50 489.10V492.90M288.50 489.10V492.90M286.50 493.10V493.90M289.50 493.10V493.90M292.50 487.50L294.10 485.50V493.50" stroke="#ffffff" stroke-linecap="square"/>
<path d="M222 365.5L227.5 371" stroke="#ffffff" stroke-width="1"/>
<path d="M227.50 359.50L230.50 368.50M230.50 359.50L227.50 368.50M233.50 360.62L234.25 359.50H235.75L236.50 360.62V362.88L233.50 368.50H236.50M242.50 359.50H239.50V362.88H241.75L242.50 364.00V367.38L241.75 368.50H239.50" stroke="#ffffff" stroke-linecap="square"/>
<path d="M222 379.5L227.5 385" stroke="#ffffff" stroke-width="1"/>
<path d="M228.50 372.50V381.50H231.00L233.50 379.25V374.75L231.00 372.50Z" stroke="#ffffff" stroke-linecap="square"/>
<path d="M222 434.5L227.5 440" stroke="#ffffff" stroke-width="1"/>
<path d="M228.50 426.50V435.50M228.50 431.00L229.25 429.88H230.75L231.50 431.00V435.50" stroke="#ffffff" stroke-linecap="square"/>
<path d="M222 468.5L227.5 474" stroke="#ffffff" stroke-width="1"/>
<path d="M228.50 462.50V471.50H232.25L233.50 470.38V468.12L232.25 467.00H228.50M228.50 462.50H232.25L233.50 463.62V465.88L232.25 467.00" stroke="#ffffff" stroke-linecap="square"/>
<path d="M222 483.5L227.5 489" stroke="#ffffff" stroke-width="1"/>
<path d="M231.50 477.50H227.50V486.50M227.50 482.00H230.50M234.50 482.23V486.50M234.50 479.64V479.86" stroke="#ffffff" stroke-linecap="square"/>
<path d="M886.5 382V409" stroke="#f8f880"/>
<rect x="886" y="413" width="1" height="1" fill="#f8f880"/>
<rect x="886" y="418" width="1" height="1" fill="#f8f880"/>
<path d="M886.5 421V437" stroke="#f8f880"/>
<rect x="886" y="440" width="1" height="1" fill="#f8f880"/>
<rect x="886" y="444" width="1" height="1" fill="#f8f880"/>
<path d="M886.5 447V461" stroke="#f8f880"/>
<path d="M886.5 460.5L874 467.5" stroke="#f8f880" stroke-width="1" shape-rendering="auto"/>
<path d="M313.50 445.10V445.90M315.50 445.10V445.90M314.17 446.10V449.90M314.83 446.10V449.90M313.50 450.10V450.90M315.50 450.10V450.90M318.50 443.50L319.25 442.50H320.75L321.50 443.50V445.50L318.50 450.50H321.50M327.50 446.50H325.25L324.50 445.50V443.50L325.25 442.50H326.75L327.50 443.50V447.50L325.25 450.50" stroke="#ffffff" stroke-linecap="square"/>
<path d="M345.50 445.10V445.90M347.50 445.10V445.90M346.17 446.10V449.90M346.83 446.10V449.90M345.50 450.10V450.90M347.50 450.10V450.90M350.50 443.50V449.50L351.25 450.50H352.75L353.50 449.50V443.50L352.75 442.50H351.25Z" stroke="#ffffff" stroke-linecap="square"/>
<path d="M375.50 445.10V445.90M377.50 445.10V445.90M376.17 446.10V449.90M376.83 446.10V449.90M375.50 450.10V450.90M377.50 450.10V450.90M382.75 450.50V442.50L380.50 448.50H383.50" stroke="#ffffff" stroke-linecap="square"/>
<path d="M416.50 445.10V445.90M418.50 445.10V445.90M417.17 446.10V449.90M417.83 446.10V449.90M416.50 450.10V450.90M418.50 450.10V450.90M424.50 446.50H422.25L421.50 445.50V443.50L422.25 442.50H423.75L424.50 443.50V447.50L422.25 450.50" stroke="#ffffff" stroke-linecap="square"/>
<path d="M187 453.5H214" stroke="#00ff00"/>
<rect x="218" y="453" width="1" height="1" fill="#00ff00"/>
<path d="M225 453.5H235" stroke="#00ff00"/>
<path d="M240 453.5H251" stroke="#00ff00"/>
<rect x="250.5" y="446.5" width="14" height="14" stroke="#00ff00" fill="#000"/>
<rect x="252" y="449" width="11" height="3" fill="#00ff00"/>
<path d="M254.5 452V456.5H260.5V452M253.5 452.5H254M261 452.5H261.5" stroke="#00ff00" fill="none" stroke-width="1"/>
<path d="M266.50 455.10V455.90M268.50 455.10V455.90M267.17 456.10V459.90M267.83 456.10V459.90M266.50 460.10V460.90M268.50 460.10V460.90M271.50 454.50L273.10 452.50V460.50" stroke="#ffffff" stroke-linecap="square"/>
<path d="M222 450.5L227.5 456" stroke="#ffffff" stroke-width="1"/>
<path d="M228.50 444.50V453.50M233.50 444.50V453.50M228.50 449.00H233.50" stroke="#ffffff" stroke-linecap="square"/>
<path d="M187 502.5H223" stroke="#0000ff"/>
<path d="M223 502.5H698" stroke="#0000ff" stroke-dasharray="26.3 5.3 5.3 5.9 4.8 5" stroke-dashoffset="26.2"/>
<path d="M698 502.5L700.5 500" stroke="#0000ff" stroke-width="1"/>
<path d="M700.5 472V501" stroke="#0000ff"/>
<path d="M222 499.5L227.5 505" stroke="#ffffff" stroke-width="1"/>
<path d="M228.50 492.50V501.50M232.50 492.50L228.50 498.12M229.50 497.00L232.50 501.50" stroke="#ffffff" stroke-linecap="square"/>
<path d="M464.5 428V463" stroke="#ff0040"/>
<path d="M498.5 428V463" stroke="#ff0040"/>
<path d="M532.5 428V463" stroke="#ff0040"/>
<path d="M566.5 428V463" stroke="#ff0040"/>
<path d="M608.5 428V463" stroke="#ff0040"/>
<path d="M632.5 428V463" stroke="#ff0040"/>
<path d="M654.5 428V463" stroke="#ff0040"/>
<path d="M700.5 428V463" stroke="#ff0040"/>
<path d="M781.5 428V463" stroke="#ff0040"/>
<path d="M815.5 428V463" stroke="#ff0040"/>
<path d="M866.5 428V463" stroke="#ff0040"/>
<path d="M917.5 428V463" stroke="#ff0040"/>
<rect x="457.5" y="418.5" width="14" height="10" stroke="#00ff00" fill="#000"/>
<path d="M465 419.5H461.5V422L464.5 424.5V426.5M461 426.5H464" stroke="#00ff00" fill="none" stroke-width="1"/>
<rect x="491.5" y="418.5" width="14" height="10" stroke="#00ff00" fill="#000"/>
<path d="M499 419.5H495.5V422L498.5 424.5V426.5M495 426.5H498" stroke="#00ff00" fill="none" stroke-width="1"/>
<rect x="525.5" y="418.5" width="14" height="10" stroke="#00ff00" fill="#000"/>
<path d="M532.5 419.5L529.5 421V426.5H531" stroke="#00ff00" fill="none" stroke-width="1"/>
<rect x="559.5" y="418.5" width="14" height="10" stroke="#00ff00" fill="#000"/>
<path d="M563.5 420V426.5H564.5M569.5 419.5V426.5M568 421.5L569.5 420" stroke="#00ff00" fill="none" stroke-width="1"/>
<rect x="601.5" y="418.5" width="14" height="10" stroke="#00ff00" fill="#000"/>
<path d="M605.5 420V426.5H606.5M611.5 419.5V426.5M610 421.5L611.5 420" stroke="#00ff00" fill="none" stroke-width="1"/>
<rect x="626.5" y="418.5" width="12" height="10" stroke="#00ff00" fill="#000"/>
<path d="M634 419.5H630.5V422L633.5 424.5V426.5M630 426.5H633" stroke="#00ff00" fill="none" stroke-width="1"/>
<rect x="647.5" y="418.5" width="14" height="10" stroke="#00ff00" fill="#000"/>
<path d="M651.5 420V426.5H652.5M657.5 419.5V426.5M656 421.5L657.5 420" stroke="#00ff00" fill="none" stroke-width="1"/>
<rect x="693.5" y="418.5" width="14" height="10" stroke="#00ff00" fill="#000"/>
<path d="M697.5 420V426.5M701 420.5L702 419.5H703L704 420.5V422L701 426.5H704" stroke="#00ff00" fill="none" stroke-width="1"/>
<rect x="774.5" y="418.5" width="14" height="10" stroke="#00ff00" fill="#000"/>
<path d="M778.5 420V426.5H779.5M784.5 419.5V426.5M783 421.5L784.5 420" stroke="#00ff00" fill="none" stroke-width="1"/>
<rect x="808.5" y="418.5" width="14" height="10" stroke="#00ff00" fill="#000"/>
<path d="M816 419.5H812.5V422L815.5 424.5V426.5M812 426.5H815" stroke="#00ff00" fill="none" stroke-width="1"/>
<rect x="859.5" y="418.5" width="14" height="10" stroke="#00ff00" fill="#000"/>
<path d="M867 419.5H863.5V422L866.5 424.5V426.5M863 426.5H866" stroke="#00ff00" fill="none" stroke-width="1"/>
<rect x="910.5" y="418.5" width="14" height="10" stroke="#00ff00" fill="#000"/>
<path d="M918 419.5H914.5V422L917.5 424.5V426.5M914 426.5H917" stroke="#00ff00" fill="none" stroke-width="1"/>
<rect x="457.5" y="463.5" width="14" height="14" stroke="#00ff00" fill="#000"/>
<ellipse cx="464.5" cy="467.5" rx="2" ry="1" stroke="#00ff00"/>
<path d="M464.5 468.5V471.5M461.5 470.5H460.5V474.5H461.5M461.5 471.5H463.5M461.5 473.5H463.5L464.5 472.5L465.5 473.5H467.5M465.5 471.5H467.5M467.5 470.5H468.5V474.5H467.5" stroke="#00ff00" fill="none" stroke-width="1"/>
<rect x="491.5" y="463.5" width="14" height="14" stroke="#00ff00" fill="#000"/>
<path d="M494 472.5H495M496 471.5H497M498 470.5H499M500 469.5L503 467" stroke="#00ff00" fill="none" stroke-width="1"/>
<path d="M503.5 466.5L499.5 468L501 470.5Z" stroke="#00ff00" fill="#00ff00" stroke-width="1" shape-rendering="auto"/>
<rect x="525.5" y="463.5" width="14" height="14" stroke="#00ff00" fill="#000"/>
<rect x="526" y="464" width="1" height="1" fill="#00ff00"/>
<rect x="538" y="476" width="1" height="1" fill="#00ff00"/>
<rect x="537" y="464" width="2" height="1" fill="#00ff00"/>
<rect x="526" y="476" width="1" height="1" fill="#00ff00"/>
<path d="M526.5 476.5L538.5 464.5" stroke="#00ff00" stroke-width="1"/>
<path d="M527.5 468.5V466.5L528.5 465.5H532.5L533.5 466.5V468.5H527.5M528.5 469V470.5" stroke="#00ff00" fill="none" stroke-width="1"/>
<circle cx="535.5" cy="473" r="2.6" stroke="#00ff00"/>
<path d="M533.5 471L537.5 475" stroke="#00ff00" stroke-width="1"/>
<rect x="556.5" y="463.5" width="22" height="10" stroke="#00ff00" fill="#000"/>
<path d="M558 465L567.0 468.5L577 472M558 472L567.0 468.5L577 465" stroke="#00ff00" fill="none" stroke-width="1"/>
<rect x="598.5" y="463.5" width="22" height="10" stroke="#00ff00" fill="#000"/>
<path d="M605.50 466.25L604.75 465.50H603.25L602.50 466.25V467.75L603.25 468.50H604.75L605.50 469.25V470.75L604.75 471.50H603.25L602.50 470.75M611.50 465.50H608.50V471.50M608.50 468.50H610.75M614.50 465.50V471.50M617.50 465.50L614.50 469.25M615.25 468.50L617.50 471.50" stroke="#ffc000" stroke-linecap="square"/>
<rect x="625.5" y="460.5" width="15" height="15" stroke="#00ff00" fill="#000"/>
<path d="M629.50 472.50V463.50H632.50L633.50 464.62V466.88L632.50 468.00H629.50" stroke="#00ff00" stroke-linecap="square"/>
<rect x="635" y="468" width="3" height="5" fill="#00ff00"/>
<rect x="637" y="467" width="1" height="1" fill="#00ff00"/>
<rect x="644.5" y="463.5" width="22" height="10" stroke="#00ff00" fill="#000"/>
<path d="M653.50 466.50V470.88L652.75 471.50H651.25L650.50 470.88M656.50 466.50V471.50H659.50" stroke="#00ff00" stroke-linecap="square"/>
<rect x="690.5" y="463.5" width="20" height="9" stroke="#00ff00" fill="#000"/>
<path d="M695.50 466.25L694.75 465.50H693.25L692.50 466.25V467.75L693.25 468.50H694.75L695.50 469.25V470.75L694.75 471.50H693.25L692.50 470.75M699.50 465.50L699.00 467.00V470.00L699.50 471.50M702.50 465.50L704.00 468.50L705.50 465.50M704.00 468.50V471.50M708.50 465.50L709.00 467.00V470.00L708.50 471.50" stroke="#00ff00" stroke-linecap="square"/>
<path d="M711 467.5H759" stroke="#ffffff"/>
<path d="M720.50 457.50L721.25 456.50H722.75L723.50 457.50V459.50L720.50 464.50H723.50M726.50 464.50V459.50L728.00 456.50L729.50 459.50V464.50M726.50 461.50H729.50M735.50 457.50L734.75 456.50H733.25L732.50 457.50V463.50L733.25 464.50H734.75L735.50 463.50M741.50 456.50H738.50V464.50M738.50 460.50H740.75M744.50 458.50L746.10 456.50V464.50" stroke="#ffffff" stroke-linecap="square"/>
<path d="M723.50 470.62L723.00 469.50H722.00L721.50 470.62V472.88L722.00 474.00H723.00L723.50 475.12V477.38L723.00 478.50H722.00L721.50 477.38M726.50 469.50L727.50 474.00L728.50 469.50M727.50 474.00V478.50M730.50 474.00H731.50M734.50 470.62L735.00 469.50H736.00L736.50 470.62V472.88L734.50 478.50H736.50M740.50 469.50H738.50V478.50M738.50 474.00H740.00M743.50 474.00H744.50M746.50 470.62V477.38L747.00 478.50H748.00L748.50 477.38V470.62L748.00 469.50H747.00ZM751.50 471.75L752.30 469.50V478.50" stroke="#ffffff" stroke-linecap="square"/>
<circle cx="781.5" cy="469.5" r="6.4" stroke="#00ff00"/>
<path d="M774.0 477.8L788.0 462.0" stroke="#00ff00" stroke-width="1"/>
<rect x="789" y="471" width="1" height="4" fill="#00ff00"/>
<rect x="791" y="471" width="4" height="4" fill="#00ff00"/>
<rect x="796" y="471" width="1" height="1" fill="#00ff00"/>
<rect x="796" y="472" width="1" height="1" fill="#00ff00"/>
<rect x="798" y="471" width="2" height="1" fill="#00ff00"/>
<rect x="798" y="471" width="1" height="4" fill="#00ff00"/>
<rect x="790" y="465" width="2" height="3" fill="#00ff00"/>
<circle cx="815.5" cy="469.5" r="6.4" stroke="#00ff00"/>
<path d="M808.0 477.8L822.0 462.0" stroke="#00ff00" stroke-width="1"/>
<rect x="823" y="471" width="1" height="4" fill="#00ff00"/>
<rect x="825" y="471" width="4" height="4" fill="#00ff00"/>
<rect x="830" y="471" width="1" height="1" fill="#00ff00"/>
<rect x="830" y="472" width="1" height="1" fill="#00ff00"/>
<rect x="832" y="471" width="2" height="1" fill="#00ff00"/>
<rect x="832" y="471" width="1" height="4" fill="#00ff00"/>
<circle cx="917.5" cy="469.5" r="6.4" stroke="#00ff00"/>
<path d="M910.0 477.8L924.0 462.0" stroke="#00ff00" stroke-width="1"/>
<rect x="925" y="471" width="1" height="4" fill="#00ff00"/>
<rect x="927" y="471" width="4" height="4" fill="#00ff00"/>
<rect x="932" y="471" width="1" height="1" fill="#00ff00"/>
<rect x="932" y="472" width="1" height="1" fill="#00ff00"/>
<rect x="934" y="471" width="2" height="1" fill="#00ff00"/>
<rect x="934" y="471" width="1" height="4" fill="#00ff00"/>
<rect x="860.5" y="463.5" width="13" height="12" stroke="#00ff00" fill="#000"/>
<rect x="860.5" y="475.5" width="13" height="12" stroke="#00ff00" fill="#000"/>
<path d="M857 469.5H860" stroke="#00ff00"/>
<path d="M874 469.5H877" stroke="#00ff00"/>
<path d="M868.5 465L864.5 468L868.5 470L864.5 473" stroke="#00ff00" fill="none" stroke-width="1"/>
<path d="M857 481.5H860" stroke="#00ff00"/>
<path d="M874 481.5H877" stroke="#00ff00"/>
<path d="M868.5 477L864.5 480L868.5 482L864.5 485" stroke="#00ff00" fill="none" stroke-width="1"/>
<path d="M527.50 483.77V484.48M529.50 483.77V484.48M528.17 484.65V487.98M528.83 484.65V487.98M527.50 488.15V488.85M529.50 488.15V488.85M534.75 488.50V481.50L532.50 486.75H535.50" stroke="#ffffff" stroke-linecap="square"/>
<path d="M548.50 483.62L549.25 482.50H550.75L551.50 483.62V485.88L548.50 491.50H551.50M554.50 491.50V485.88L556.00 482.50L557.50 485.88V491.50M554.50 488.12H557.50M560.50 482.50V491.50H563.50M569.50 482.50H566.50V491.50H569.50M566.50 487.00H568.75M572.50 484.75L573.30 482.50V491.50M576.50 490.38L576.50 493.75M578.50 483.62L579.25 482.50H580.75L581.50 483.62V485.88L578.50 491.50H581.50" stroke="#ffffff" stroke-linecap="square"/>
<path d="M649.50 484.77V485.48M651.50 484.77V485.48M650.17 485.65V488.98M650.83 485.65V488.98M649.50 489.15V489.85M651.50 489.15V489.85M654.50 482.50H657.50V483.38L655.25 489.50" stroke="#ffffff" stroke-linecap="square"/>
<path d="M778.50 484.77V485.48M780.50 484.77V485.48M779.17 485.65V488.98M779.83 485.65V488.98M778.50 489.15V489.85M780.50 489.15V489.85M786.50 482.50H783.50V485.12H785.75L786.50 486.00V488.62L785.75 489.50H783.50" stroke="#ffffff" stroke-linecap="square"/>
<path d="M812.50 484.77V485.48M814.50 484.77V485.48M813.17 485.65V488.98M813.83 485.65V488.98M812.50 489.15V489.85M814.50 489.15V489.85M817.50 483.38L818.25 482.50H819.75L820.50 483.38V485.12L817.50 489.50H820.50" stroke="#ffffff" stroke-linecap="square"/>
<path d="M861.50 493.77V494.48M863.50 493.77V494.48M862.17 494.65V497.98M862.83 494.65V497.98M861.50 498.15V498.85M863.50 498.15V498.85M866.50 492.38L867.25 491.50H868.75L869.50 492.38V494.12L866.50 498.50H869.50" stroke="#ffffff" stroke-linecap="square"/>
<path d="M914.50 484.77V485.48M917.50 484.77V485.48M915.50 485.65V488.98M916.50 485.65V488.98M914.50 489.15V489.85M917.50 489.15V489.85M921.50 484.25L923.10 482.50V489.50" stroke="#ffffff" stroke-linecap="square"/>
<path d="M629 438.5L634 444.5" stroke="#ffffff" stroke-width="1"/>
<path d="M634 444.5L637 437.5" stroke="#ffffff" stroke-width="1"/>
<path d="M642.50 438.38L641.25 437.50H638.75L637.50 438.38V440.12L638.75 441.00H641.25L642.50 441.88V443.62L641.25 444.50H638.75L637.50 443.62" stroke="#ffffff" stroke-linecap="square"/>
<path d="M658.50 431.10V431.90M660.50 431.10V431.90M659.17 432.10V435.90M659.83 432.10V435.90M658.50 436.10V436.90M660.50 436.10V436.90M663.50 428.50H666.50V429.50L664.25 436.50" stroke="#ffffff" stroke-linecap="square"/>
<path d="M785.50 431.77V432.48M787.50 431.77V432.48M786.17 432.65V435.98M786.83 432.65V435.98M785.50 436.15V436.85M787.50 436.15V436.85M793.50 429.50H790.50V432.12H792.75L793.50 433.00V435.62L792.75 436.50H790.50" stroke="#ffffff" stroke-linecap="square"/>
<path d="M819.50 431.77V432.48M821.50 431.77V432.48M820.17 432.65V435.98M820.83 432.65V435.98M819.50 436.15V436.85M821.50 436.15V436.85M824.50 430.38L825.25 429.50H826.75L827.50 430.38V432.12L824.50 436.50H827.50" stroke="#ffffff" stroke-linecap="square"/>
<path d="M868.50 433.77V434.48M870.50 433.77V434.48M869.17 434.65V437.98M869.83 434.65V437.98M868.50 438.15V438.85M870.50 438.15V438.85M873.50 432.38L874.25 431.50H875.75L876.50 432.38V434.12L873.50 438.50H876.50" stroke="#ffffff" stroke-linecap="square"/>
<path d="M924.50 434.77V435.48M926.50 434.77V435.48M925.17 435.65V438.98M925.83 435.65V438.98M924.50 439.15V439.85M926.50 439.15V439.85M929.50 434.25L931.10 432.50V439.50" stroke="#ffffff" stroke-linecap="square"/>
<path d="M1027.50 402.50V410.50H1030.50M1033.50 403.50L1034.25 402.50H1035.75L1036.50 403.50V405.50L1033.50 410.50H1036.50M1039.50 406.50H1041.50M1044.50 404.50L1045.30 402.50V410.50M1051.50 402.50H1048.50V410.50M1048.50 406.50H1050.75M1057.50 403.50L1056.75 402.50H1055.25L1054.50 403.50V405.50L1055.25 406.50H1056.75L1057.50 407.50V409.50L1056.75 410.50H1055.25L1054.50 409.50" stroke="#ffffff" stroke-linecap="square"/>
<rect x="1080.5" y="411.5" width="45" height="24" stroke="#00ff00" fill="#000"/>
<path d="M250 194.6 L265 184.1 L266.7 188.1 L334.3 179.2 L268.6 195.7 L267.6 199.5Z" fill="#fc3c3c" shape-rendering="auto"/>
<path d="M257.1 372.1 L276 375.7 L274.3 378.6 L352.9 435 L270 385 L267.9 387.9Z" fill="#fc3c3c" shape-rendering="auto"/>
<path d="M1096 412h1v1h-1zM1101 412h1v1h-1zM1095 413h4v1h-4zM1103 412h3v2h-3zM1116 413h2v1h-2zM1090 412h1v3h-1zM1094 414h5v1h-5zM1105 414h1v1h-1zM1115 414h4v1h-4zM1088 415h5v1h-5zM1094 415h1v1h-1zM1097 415h1v1h-1zM1101 415h5v1h-5zM1107 415h5v1h-5zM1088 416h4v1h-4zM1095 416h1v1h-1zM1109 416h3v1h-3zM1114 415h5v2h-5zM1090 417h1v1h-1zM1094 417h1v1h-1zM1098 416h1v2h-1zM1101 416h2v2h-2zM1104 416h2v2h-2zM1109 417h2v1h-2zM1114 417h1v1h-1zM1116 417h1v1h-1zM1118 417h1v1h-1zM1089 418h2v1h-2zM1095 418h4v1h-4zM1101 418h5v1h-5zM1110 418h1v1h-1zM1116 418h3v1h-3zM1101 419h2v1h-2zM1104 419h2v1h-2zM1111 419h1v1h-1zM1115 419h2v1h-2zM1089 419h1v2h-1zM1091 419h1v2h-1zM1101 420h5v1h-5zM1108 418h1v3h-1zM1111 420h2v1h-2zM1114 420h3v1h-3zM1118 419h1v2h-1zM1091 421h2v1h-2zM1096 419h1v3h-1zM1116 421h1v1h-1zM1088 421h1v2h-1zM1092 422h1v1h-1zM1094 422h5v1h-5zM1105 421h1v2h-1zM1109 422h1v1h-1zM1114 421h1v2h-1zM1116 422h3v1h-3zM1090 423h1v1h-1zM1094 423h4v1h-4zM1101 421h1v3h-1zM1107 423h1v1h-1zM1116 423h2v1h-2zM1121 423h1v1h-1zM1083 423h1v2h-1zM1089 424h3v1h-3zM1101 424h5v1h-5zM1107 424h5v1h-5zM1114 424h3v1h-3zM1123 423h1v2h-1zM1081 425h4v1h-4zM1087 425h6v1h-6zM1097 424h1v2h-1zM1101 425h2v1h-2zM1105 425h1v1h-1zM1108 425h1v1h-1zM1110 425h2v1h-2zM1115 425h1v1h-1zM1120 425h1v1h-1zM1122 425h3v1h-3zM1087 426h3v1h-3zM1100 426h2v1h-2zM1103 426h2v1h-2zM1108 426h4v1h-4zM1116 426h1v1h-1zM1120 426h2v1h-2zM1123 426h1v1h-1zM1081 426h1v2h-1zM1083 426h1v2h-1zM1085 426h1v2h-1zM1097 426h2v2h-2zM1101 427h2v1h-2zM1107 427h5v1h-5zM1114 427h3v1h-3zM1120 427h3v1h-3zM1124 427h1v1h-1zM1081 428h5v1h-5zM1089 427h1v2h-1zM1091 427h1v2h-1zM1098 428h1v1h-1zM1101 428h1v1h-1zM1103 428h1v1h-1zM1115 428h1v1h-1zM1117 428h1v1h-1zM1120 428h5v1h-5zM1081 429h1v1h-1zM1083 429h1v1h-1zM1085 429h1v1h-1zM1088 429h4v1h-4zM1095 424h1v6h-1zM1101 429h4v1h-4zM1114 429h4v1h-4zM1120 429h1v1h-1zM1122 429h1v1h-1zM1081 430h5v1h-5zM1087 430h1v1h-1zM1089 430h3v1h-3zM1100 430h2v1h-2zM1108 428h4v3h-4zM1114 430h3v1h-3zM1118 430h1v1h-1zM1120 430h3v1h-3zM1081 431h4v1h-4zM1101 431h1v1h-1zM1103 430h2v2h-2zM1109 431h3v1h-3zM1122 431h1v1h-1zM1096 430h2v3h-2zM1101 432h4v1h-4zM1107 431h1v2h-1zM1109 432h1v1h-1zM1116 431h2v2h-2zM1121 432h2v1h-2zM1083 432h1v2h-1zM1085 432h1v2h-1zM1090 431h1v3h-1zM1094 431h1v3h-1zM1096 433h3v1h-3zM1101 433h3v1h-3zM1105 433h1v1h-1zM1107 433h3v1h-3zM1114 432h1v2h-1zM1116 433h1v1h-1zM1118 433h1v1h-1zM1120 433h1v1h-1zM1122 433h1v1h-1zM1083 434h3v1h-3zM1087 434h1v1h-1zM1089 434h3v1h-3zM1095 434h1v1h-1zM1098 434h1v1h-1zM1100 434h2v1h-2zM1103 434h1v1h-1zM1108 434h1v1h-1zM1111 432h1v3h-1zM1115 434h1v1h-1zM1124 433h1v2h-1zM1082 438h1v1h-1zM1096 438h1v1h-1zM1100 438h5v1h-5zM1108 438h3v1h-3zM1114 438h1v1h-1zM1076 438h1v2h-1zM1081 439h4v1h-4zM1107 439h5v1h-5zM1120 438h1v2h-1zM1127 439h1v1h-1zM1074 440h4v1h-4zM1081 440h3v1h-3zM1088 438h1v3h-1zM1111 440h1v1h-1zM1114 439h2v2h-2zM1122 438h2v3h-2zM1074 441h5v1h-5zM1094 439h1v3h-1zM1100 440h3v2h-3zM1110 441h1v1h-1zM1115 441h1v1h-1zM1117 440h1v2h-1zM1123 441h1v1h-1zM1129 438h1v4h-1zM1080 442h5v1h-5zM1091 442h1v1h-1zM1097 440h1v3h-1zM1106 442h1v1h-1zM1108 440h1v3h-1zM1119 442h3v1h-3zM1124 442h1v1h-1zM1126 442h5v1h-5zM1074 442h1v2h-1zM1076 442h1v2h-1zM1078 442h1v2h-1zM1081 443h1v1h-1zM1090 443h2v1h-2zM1093 442h1v2h-1zM1100 443h3v1h-3zM1109 443h1v1h-1zM1113 441h1v3h-1zM1115 442h2v2h-2zM1120 443h1v1h-1zM1122 443h2v1h-2zM1127 443h4v1h-4zM1081 444h4v1h-4zM1095 442h1v3h-1zM1108 444h3v1h-3zM1115 444h1v1h-1zM1120 444h4v1h-4zM1074 444h5v2h-5zM1083 445h2v1h-2zM1087 441h2v5h-2zM1096 445h1v1h-1zM1100 444h1v2h-1zM1123 445h1v1h-1zM1083 446h1v1h-1zM1090 444h1v3h-1zM1097 446h1v1h-1zM1107 446h1v1h-1zM1109 445h2v2h-2zM1114 445h2v2h-2zM1120 445h1v2h-1zM1122 446h2v1h-2zM1074 446h1v2h-1zM1076 446h1v2h-1zM1078 446h1v2h-1zM1081 447h3v1h-3zM1094 446h1v2h-1zM1096 447h2v1h-2zM1100 446h3v2h-3zM1108 447h3v1h-3zM1120 447h4v1h-4zM1074 448h5v1h-5zM1082 448h2v1h-2zM1088 446h1v3h-1zM1090 448h1v1h-1zM1094 448h4v1h-4zM1104 439h1v10h-1zM1106 448h1v1h-1zM1108 448h2v1h-2zM1111 448h1v1h-1zM1115 447h1v2h-1zM1117 448h1v1h-1zM1120 448h1v1h-1zM1122 448h2v1h-2zM1127 444h1v5h-1zM1074 449h1v1h-1zM1078 449h1v1h-1zM1083 449h1v1h-1zM1087 449h5v1h-5zM1103 449h2v1h-2zM1109 449h1v1h-1zM1116 449h2v1h-2zM1121 449h1v1h-1zM1124 449h1v1h-1zM1129 444h1v6h-1zM1090 451h6v1h-6zM1098 451h1v1h-1zM1111 451h4v1h-4zM1119 451h1v1h-1zM1104 452h1v1h-1zM1107 451h1v2h-1zM1117 452h5v1h-5zM1086 451h1v3h-1zM1090 452h1v2h-1zM1092 453h2v1h-2zM1098 452h4v2h-4zM1118 453h1v1h-1zM1120 453h1v1h-1zM1084 454h5v1h-5zM1090 454h4v1h-4zM1104 453h5v2h-5zM1117 454h5v1h-5zM1085 455h2v1h-2zM1104 455h1v1h-1zM1107 455h2v1h-2zM1111 454h4v2h-4zM1118 455h3v1h-3zM1085 456h3v1h-3zM1090 455h1v2h-1zM1092 455h2v2h-2zM1095 452h1v5h-1zM1097 454h1v3h-1zM1101 454h1v3h-1zM1103 456h2v1h-2zM1106 456h3v1h-3zM1090 457h3v1h-3zM1094 457h2v1h-2zM1099 454h1v4h-1zM1104 457h5v1h-5zM1118 456h4v2h-4zM1084 458h1v1h-1zM1086 457h2v2h-2zM1093 458h1v1h-1zM1118 458h1v1h-1zM1121 458h1v1h-1zM1084 459h5v1h-5zM1092 459h1v1h-1zM1111 457h1v3h-1zM1114 457h1v3h-1zM1118 459h3v1h-3zM1085 460h4v1h-4zM1090 458h1v3h-1zM1093 460h1v1h-1zM1095 458h1v3h-1zM1100 458h1v3h-1zM1104 458h4v3h-4zM1110 460h1v1h-1zM1115 460h1v1h-1zM1118 460h2v1h-2zM1121 460h1v1h-1zM1099 461h1v1h-1zM1101 461h1v1h-1zM1104 461h5v1h-5zM1117 461h2v1h-2zM1120 461h2v1h-2zM1086 461h1v2h-1zM1090 461h6v2h-6zM1098 462h1v1h-1zM1104 462h1v1h-1zM1108 462h1v1h-1zM1112 462h1v1h-1zM1118 462h3v1h-3zM1078 464h1v1h-1zM1081 464h4v1h-4zM1121 464h1v1h-1zM1127 464h1v1h-1zM1074 465h1v1h-1zM1076 464h1v2h-1zM1096 465h1v1h-1zM1101 465h5v1h-5zM1116 465h1v1h-1zM1121 465h5v1h-5zM1128 465h4v1h-4zM1076 466h3v1h-3zM1094 466h5v1h-5zM1114 466h5v1h-5zM1121 466h2v1h-2zM1125 466h1v1h-1zM1076 467h2v1h-2zM1089 464h1v4h-1zM1098 467h1v1h-1zM1118 467h1v1h-1zM1120 467h2v1h-2zM1123 467h2v1h-2zM1128 466h1v2h-1zM1073 468h2v1h-2zM1077 468h1v1h-1zM1081 465h1v4h-1zM1087 468h5v1h-5zM1095 468h1v1h-1zM1097 468h1v1h-1zM1102 467h2v2h-2zM1121 468h2v1h-2zM1127 468h2v1h-2zM1076 469h3v1h-3zM1097 469h2v1h-2zM1107 469h1v1h-1zM1111 467h1v3h-1zM1116 468h1v2h-1zM1121 469h1v1h-1zM1123 469h1v1h-1zM1081 469h2v2h-2zM1084 465h1v6h-1zM1089 469h1v2h-1zM1094 469h1v2h-1zM1102 470h2v1h-2zM1121 470h4v1h-4zM1074 469h1v3h-1zM1077 470h1v2h-1zM1081 471h4v1h-4zM1094 471h4v1h-4zM1109 464h1v8h-1zM1114 470h1v2h-1zM1116 470h2v2h-2zM1120 471h2v1h-2zM1128 469h1v3h-1zM1130 466h2v6h-2zM1074 472h5v1h-5zM1115 472h2v1h-2zM1121 472h1v1h-1zM1123 471h2v2h-2zM1127 472h5v1h-5zM1074 473h2v1h-2zM1082 472h2v2h-2zM1085 473h1v1h-1zM1088 472h1v2h-1zM1090 471h1v3h-1zM1102 472h2v2h-2zM1108 472h1v2h-1zM1110 472h1v2h-1zM1115 473h1v1h-1zM1121 473h4v1h-4zM1074 474h1v1h-1zM1081 474h1v1h-1zM1083 474h3v1h-3zM1096 472h1v3h-1zM1100 467h1v8h-1zM1105 466h1v9h-1zM1107 474h2v1h-2zM1117 474h1v1h-1zM1121 474h3v1h-3zM1125 474h1v1h-1zM1127 473h1v2h-1zM1129 473h1v2h-1zM1077 473h1v3h-1zM1080 475h1v1h-1zM1083 475h2v1h-2zM1087 474h1v2h-1zM1091 474h1v2h-1zM1094 475h5v1h-5zM1104 475h1v1h-1zM1107 475h1v1h-1zM1111 474h1v2h-1zM1114 474h1v2h-1zM1118 475h1v1h-1zM1120 475h2v1h-2zM1123 475h1v1h-1zM1128 475h1v1h-1zM1131 475h1v1h-1zM1078 477h3v1h-3zM1100 477h1v1h-1zM1105 477h1v1h-1zM1108 477h1v1h-1zM1110 477h5v1h-5zM1117 477h5v1h-5zM1123 477h5v1h-5zM1091 478h1v1h-1zM1093 477h1v2h-1zM1099 478h3v1h-3zM1110 478h1v1h-1zM1117 478h2v1h-2zM1121 478h1v1h-1zM1127 478h1v1h-1zM1079 479h1v1h-1zM1086 477h1v3h-1zM1091 479h5v1h-5zM1097 479h5v1h-5zM1104 478h2v2h-2zM1110 479h5v1h-5zM1123 478h1v2h-1zM1125 479h3v1h-3zM1079 480h4v1h-4zM1084 480h3v1h-3zM1088 480h1v1h-1zM1091 480h3v1h-3zM1095 480h1v1h-1zM1097 480h3v1h-3zM1105 480h1v1h-1zM1107 478h2v3h-2zM1110 480h2v1h-2zM1114 480h1v1h-1zM1117 479h5v2h-5zM1123 480h2v1h-2zM1126 480h2v1h-2zM1091 481h5v1h-5zM1099 481h1v1h-1zM1101 480h1v2h-1zM1104 481h5v1h-5zM1110 481h5v1h-5zM1117 481h2v1h-2zM1121 481h1v1h-1zM1123 481h1v1h-1zM1125 481h1v1h-1zM1127 481h1v1h-1zM1079 481h1v2h-1zM1098 482h2v1h-2zM1105 482h1v1h-1zM1107 482h2v1h-2zM1110 482h2v1h-2zM1114 482h1v1h-1zM1119 482h3v1h-3zM1123 482h5v1h-5zM1081 483h1v1h-1zM1085 481h3v3h-3zM1097 483h5v1h-5zM1104 483h5v1h-5zM1110 483h5v1h-5zM1125 483h1v1h-1zM1085 484h2v1h-2zM1091 482h1v3h-1zM1093 482h3v3h-3zM1097 484h1v1h-1zM1110 484h1v1h-1zM1113 484h1v1h-1zM1117 482h1v3h-1zM1119 484h2v1h-2zM1127 483h1v2h-1zM1088 484h1v2h-1zM1091 485h3v1h-3zM1113 485h2v1h-2zM1117 485h4v1h-4zM1123 483h1v3h-1zM1125 485h3v1h-3zM1078 483h1v4h-1zM1080 484h2v3h-2zM1084 485h1v2h-1zM1091 486h1v1h-1zM1093 486h1v1h-1zM1095 486h1v1h-1zM1100 484h1v3h-1zM1105 484h2v3h-2zM1108 484h1v3h-1zM1110 485h2v2h-2zM1114 486h1v1h-1zM1116 486h2v1h-2zM1079 487h1v1h-1zM1082 487h1v1h-1zM1086 485h1v3h-1zM1093 487h3v1h-3zM1097 487h1v1h-1zM1099 487h3v1h-3zM1105 487h1v1h-1zM1107 487h2v1h-2zM1112 487h1v1h-1zM1118 487h4v1h-4zM1123 486h5v2h-5zM1080 489h3v1h-3zM1092 489h1v1h-1zM1098 489h6v1h-6zM1107 489h1v1h-1zM1118 489h5v1h-5zM1080 490h2v1h-2zM1087 489h1v2h-1zM1092 490h5v1h-5zM1101 490h1v1h-1zM1114 490h1v1h-1zM1119 490h1v1h-1zM1079 491h5v1h-5zM1094 491h3v1h-3zM1100 491h1v1h-1zM1105 490h5v2h-5zM1112 491h4v1h-4zM1119 491h4v1h-4zM1081 492h1v1h-1zM1086 491h4v2h-4zM1094 492h1v1h-1zM1100 492h2v1h-2zM1105 492h1v1h-1zM1109 492h1v1h-1zM1112 492h1v1h-1zM1118 492h2v1h-2zM1122 492h1v1h-1zM1092 493h5v1h-5zM1100 493h3v1h-3zM1106 493h3v1h-3zM1112 493h4v1h-4zM1119 493h4v1h-4zM1079 493h4v2h-4zM1099 494h1v1h-1zM1102 494h1v1h-1zM1106 494h1v1h-1zM1108 494h1v1h-1zM1112 494h1v1h-1zM1120 494h1v1h-1zM1079 495h1v1h-1zM1081 495h1v1h-1zM1087 493h1v3h-1zM1094 495h2v1h-2zM1098 495h2v1h-2zM1103 495h1v1h-1zM1106 495h3v1h-3zM1112 495h4v1h-4zM1118 495h3v1h-3zM1122 495h1v1h-1zM1093 496h3v1h-3zM1106 496h1v1h-1zM1108 496h1v1h-1zM1079 496h4v2h-4zM1092 497h1v1h-1zM1106 497h3v1h-3zM1112 496h1v2h-1zM1116 496h1v2h-1zM1119 496h3v2h-3zM1081 498h1v1h-1zM1086 496h1v3h-1zM1089 493h1v6h-1zM1092 498h2v1h-2zM1095 497h2v2h-2zM1106 498h1v1h-1zM1108 498h1v1h-1zM1112 498h5v1h-5zM1118 498h1v1h-1zM1122 498h1v1h-1zM1079 499h5v1h-5zM1085 499h1v1h-1zM1088 499h2v1h-2zM1093 499h1v1h-1zM1096 499h1v1h-1zM1105 499h5v1h-5zM1120 498h1v2h-1z" fill="#fff"/>
</svg></body></html>
